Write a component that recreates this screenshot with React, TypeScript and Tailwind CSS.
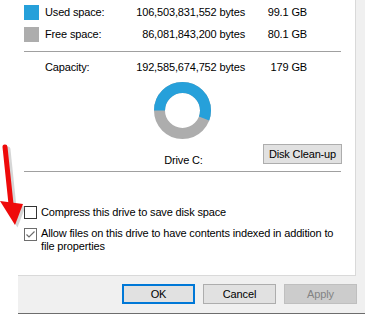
export default function App() {
    const C = 2 * Math.PI * 23;
    const used = 106503831552 / 192585674752;

    return (
        <div className="relative w-[365px] h-[314px] overflow-hidden bg-white text-[11px] tracking-[-0.15px] leading-[15px] text-black font-['Liberation_Sans',Arial,sans-serif]">
            <div className="flex h-[275px]">
                <div className="w-[356px] bg-white border-r border-[#d9d9d9] pl-[24px] pr-[14px] pt-[5px]">
                    <div className="flex items-center h-[15px] whitespace-nowrap">
                        <div className="w-[15px] h-[15px] bg-[#26a0da]" />
                        <div className="ml-[6px] w-[80px]">Used space:</div>
                        <div className="w-[120px] text-right">106,503,831,552 bytes</div>
                        <div className="w-[62px] text-right">99.1 GB</div>
                    </div>
                    <div className="flex items-center h-[15px] mt-[7px] whitespace-nowrap">
                        <div className="w-[15px] h-[15px] bg-[#adadad]" />
                        <div className="ml-[6px] w-[80px]">Free space:</div>
                        <div className="w-[120px] text-right">86,081,843,200 bytes</div>
                        <div className="w-[62px] text-right">80.1 GB</div>
                    </div>
                    <div className="h-px bg-[#a0a0a0] mt-[9px]" />
                    <div className="flex items-center h-[15px] mt-[8px] whitespace-nowrap">
                        <div className="w-[15px]" />
                        <div className="ml-[6px] w-[80px]">Capacity:</div>
                        <div className="w-[120px] text-right">192,585,674,752 bytes</div>
                        <div className="w-[62px] text-right">179 GB</div>
                    </div>
                    <div className="flex justify-center mt-[7px]">
                        <svg width="57" height="57" viewBox="0 0 57 57">
                            <circle cx="28.5" cy="28.5" r="23" fill="none" stroke="#adadad" strokeWidth="11" />
                            <circle
                                cx="28.5" cy="28.5" r="23" fill="none" stroke="#26a0da" strokeWidth="11"
                                strokeDasharray={`${used * C} ${C}`}
                                transform="rotate(180 28.5 28.5)"
                            />
                        </svg>
                    </div>
                    <div className="grid grid-cols-[1fr_auto_1fr] items-end mt-[5px] h-[20px]">
                        <div />
                        <div className="leading-[14px] -mb-[3px] ml-[2px] whitespace-nowrap">Drive C:</div>
                        <div className="flex justify-end -mr-[1px]">
                            <button className="h-[20px] w-[79px] bg-[#e1e1e1] border border-[#adadad] leading-[16px] whitespace-nowrap">Disk Clean-up</button>
                        </div>
                    </div>
                    <div className="h-px bg-[#a0a0a0] mt-[7px]" />
                    <div className="flex items-center mt-[33px]">
                        <div className="w-[13px] h-[13px] border border-[#333] bg-white" />
                        <span className="ml-[4px]">Compress this drive to save disk space</span>
                    </div>
                    <div className="flex items-start mt-[8px]">
                        <div className="flex items-center justify-center w-[13px] h-[13px] border border-[#6d6d6d] bg-white shrink-0">
                            <svg width="11" height="11" viewBox="0 0 11 11">
                                <path d="M1.5 5.5 L4 8 L9.5 2.5" fill="none" stroke="#6d6d6d" strokeWidth="1.2" />
                            </svg>
                        </div>
                        <span className="ml-[4px] -mt-[1px] leading-[13px]">Allow files on this drive to have contents indexed in addition to file properties</span>
                    </div>
                </div>
                <div className="flex-1 bg-[#f0f0f0]" />
            </div>
            <div className="flex h-[39px]">
                <div className="w-[18px] bg-white" />
                <div className="flex-1 flex flex-col bg-[#f0f0f0]">
                    <div className="w-[338px] h-px bg-[#d9d9d9]" />
                    <div className="flex justify-end gap-[8px] pr-[8px] mt-[8px]">
                        <button className="w-[73px] h-[20px] bg-[#e1e1e1] border-2 border-[#0078d7] leading-[16px]">OK</button>
                        <button className="w-[73px] h-[20px] bg-[#e1e1e1] border border-[#adadad] leading-[18px]">Cancel</button>
                        <button className="w-[73px] h-[20px] bg-[#cccccc] border border-[#bfbfbf] text-[#838383] leading-[18px]">Apply</button>
                    </div>
                    <div className="flex-1" />
                    <div className="h-px bg-[#6d6d6d]" />
                </div>
            </div>
            <svg className="absolute left-0 top-[140px]" width="30" height="95" viewBox="0 0 30 95">
                <path d="M6 8 L12 66" stroke="#8a8a8a" strokeOpacity="0.35" strokeWidth="6" strokeLinecap="round" transform="translate(1.5 1.5)" />
                <polygon points="1,62 24,65 16,86" fill="#8a8a8a" fillOpacity="0.35" transform="translate(1.5 1.5)" />
                <path d="M5 7 L11 64" stroke="#ee0a0a" strokeWidth="5" strokeLinecap="round" />
                <polygon points="0,61 23,64 15,85" fill="#ee0a0a" />
            </svg>
        </div>
    );
}
